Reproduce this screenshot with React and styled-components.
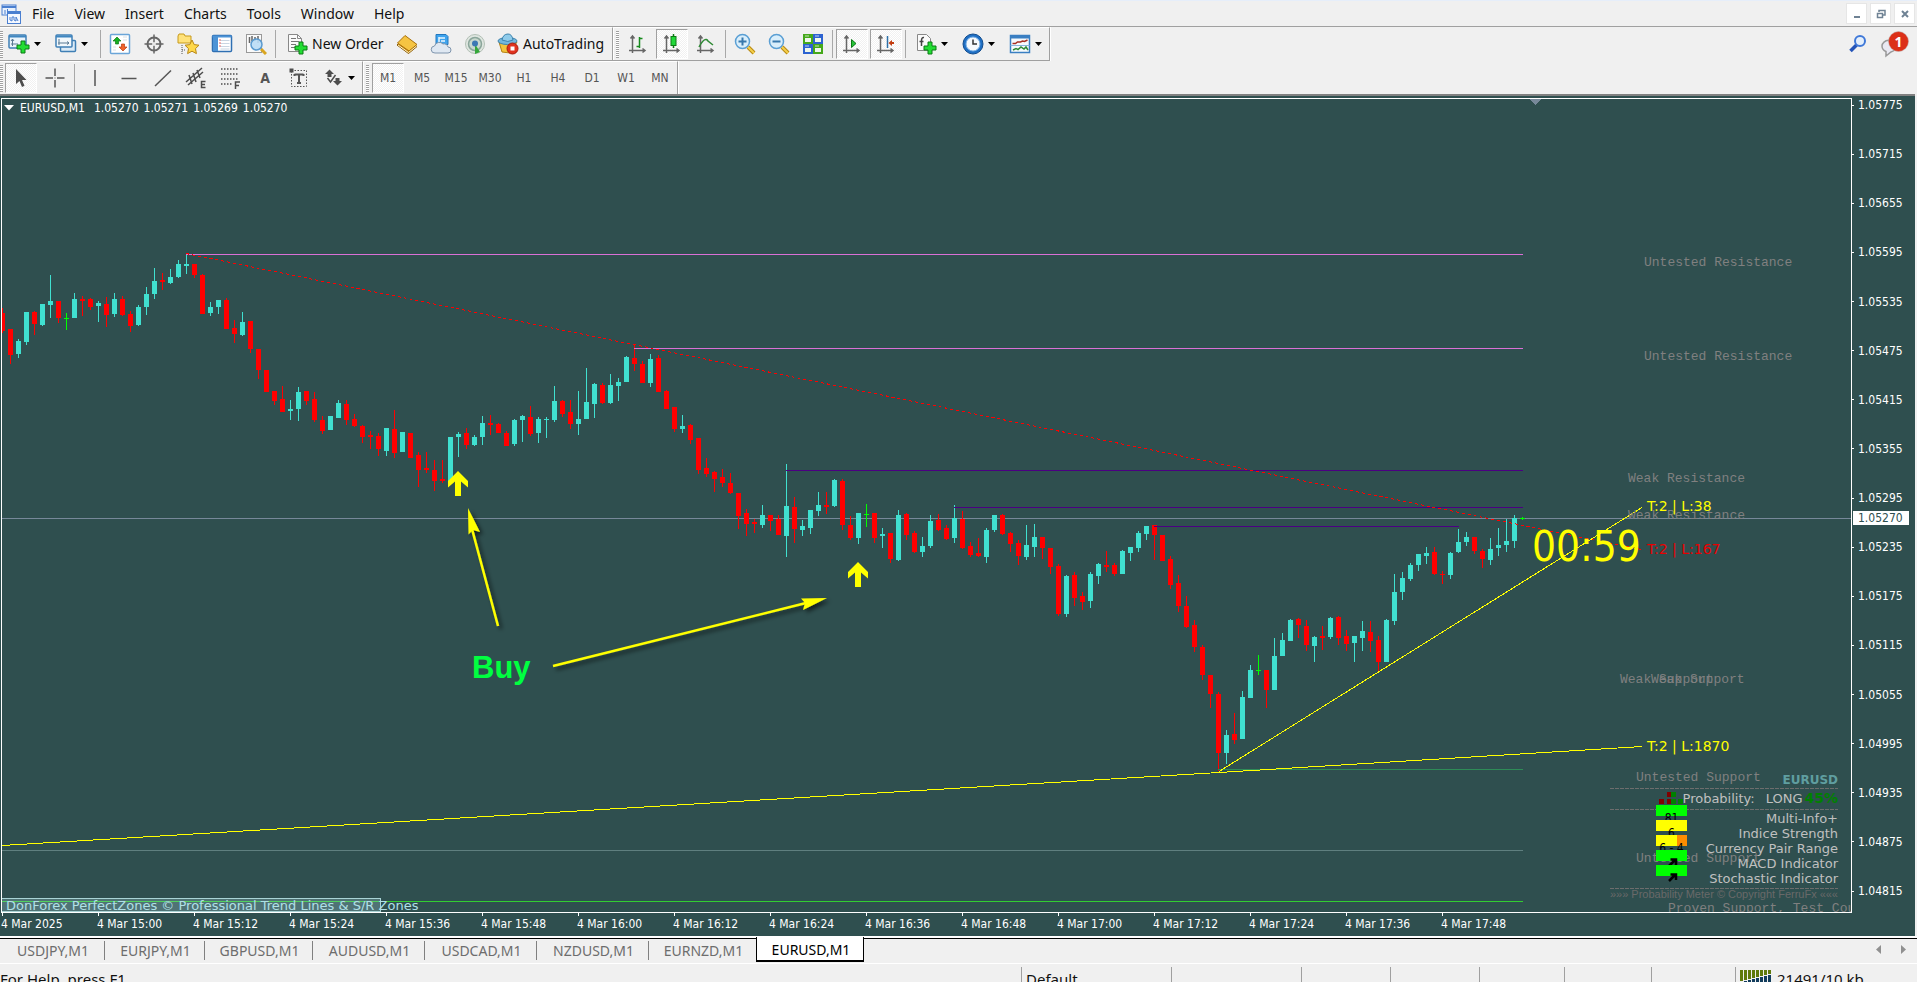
import React from "react";
import styled, { createGlobalStyle, css } from "styled-components";

const UI_FONT = '"Noto Sans", "Open Sans", sans-serif';
const CHART_FONT = '"DejaVu Sans Condensed", "DejaVu Sans", sans-serif';
const WIDE_FONT = '"DejaVu Sans", sans-serif';
const MONO_FONT = '"Liberation Mono", monospace';

const GlobalStyle = createGlobalStyle`
  * { box-sizing: border-box; }
  body { margin: 0; background: #f0f0f0; overflow: hidden; }
  button { font: inherit; color: inherit; border: 0; padding: 0; background: none; }
`;

const Window = styled.div`
  display: flex;
  flex-direction: column;
  height: 100vh;
  background: #f0f0f0;
  font-family: ${UI_FONT};
  color: #111;
`;

/* ---------- menu and toolbars ---------- */

const MenuBar = styled.nav`
  display: flex;
  align-items: center;
  flex: none;
  height: 27px;
  border-top: 1px solid #e6eefa;
  border-bottom: 1px solid #a0a0a0;
  font-size: 14px;
`;

const MenuItem = styled.button`
  padding: 0 10px;
  line-height: 24px;
  white-space: nowrap;
`;

const WindowButtons = styled.div`
  display: flex;
  gap: 3px;
  margin: 0 2px 0 auto;
`;

const WindowButton = styled.button`
  display: flex;
  align-items: center;
  justify-content: center;
  width: 21px;
  height: 21px;
  background: #fff;
  border: 1px solid #e6e6e6;
`;

const ToolRow = styled.div`
  display: flex;
  flex: none;
  height: ${(p) => (p.$last ? "33px" : "34px")};
`;

const ToolStrip = styled.div`
  display: flex;
  align-items: center;
  border-top: 1px solid #fff;
  border-right: 1px solid #a0a0a0;
  border-bottom: ${(p) => (p.$last ? "0" : "1px solid #a0a0a0")};
  box-shadow: 1px 0 0 #fff;
  padding-left: ${(p) => (p.$first ? "0" : "3px")};
`;

const Grip = styled.span`
  width: 3px;
  height: 27px;
  margin-right: ${(p) => (p.$first ? "1px" : "2px")};
  background: repeating-linear-gradient(#a0a0a0 0 1px, #fff 1px 2px);
`;

const Divider = styled.span`
  width: 1px;
  height: 28px;
  margin: 0 2px;
  background: #a8a8a8;
`;

const pressed = css`
  background: repeating-conic-gradient(#fff 0 25%, #f1f1f1 0 50%) 0 0 / 2px 2px;
  border: 1px solid #fff;
  border-top-color: #a0a0a0;
  border-left-color: #a0a0a0;
`;

const ToolButton = styled.button`
  display: flex;
  align-items: center;
  justify-content: center;
  width: 32px;
  height: 30px;
  margin: 0 1px;
  ${(p) => p.$pressed && pressed}
`;

const SplitButton = styled.button`
  display: flex;
  align-items: center;
  justify-content: center;
  gap: 4px;
  width: 47px;
  height: 30px;
  padding-right: ${(p) => (p.$near ? "6px" : "0")};
`;

const TextButton = styled.button`
  display: flex;
  align-items: center;
  gap: 4px;
  height: 30px;
  width: ${(p) => p.$w}px;
  padding-left: ${(p) => p.$pad}px;
  font-size: 14px;
  line-height: 20px;
  white-space: nowrap;
`;

const PeriodButton = styled(ToolButton)`
  font-family: ${CHART_FONT};
  font-size: 12px;
  color: #555;
`;

const ToolRight = styled.div`
  display: flex;
  align-items: center;
  gap: 13px;
  margin: 0 8px 0 auto;
`;

const IconButton = styled.button`
  display: flex;
`;

/* ---------- chart ---------- */

const ChartFrame = styled.main`
  flex: 1;
  min-height: 0;
  display: grid;
  grid-template-columns: 1fr 63px;
  grid-template-rows: 1fr 23px;
  padding: 2px 0 0 1px;
  margin-right: 2px;
  background: #2f4f4f;
  color: #fff;
  border-top: 2px solid #808080;
  font-family: ${CHART_FONT};
  font-size: 12px;
  line-height: 14px;
`;

const Plot = styled.section`
  position: relative;
  border: 1px solid #fff;
  overflow: hidden;
`;

const Drawing = styled.svg`
  position: absolute;
  inset: 0;
  width: 100%;
  height: 100%;
`;

const PlotTitle = styled.h1`
  position: absolute;
  top: 2px;
  left: 2px;
  display: flex;
  align-items: center;
  gap: 5px;
  margin: 0;
  font-size: 12px;
  font-weight: 400;
  line-height: 14px;
  white-space: nowrap;
`;

const SymbolName = styled.span`
  margin: 0 4px 0 1px;
`;

const PriceAxis = styled.aside`
  position: relative;
  display: flex;
  flex-direction: column;
  justify-content: space-between;
  padding-bottom: 15px;
`;

const PriceLabel = styled.span`
  display: flex;
  align-items: center;
  gap: 4px;
  &::before { content: ""; width: 2px; height: 1px; background: #fff; }
`;

const CurrentPrice = styled.span`
  position: absolute;
  top: 413px;
  left: 1px;
  width: 56px;
  padding-left: 5px;
  background: #fff;
  color: #2f4f4f;
`;

const TimeAxis = styled.footer`
  display: flex;
  overflow: hidden;
  grid-column: 1 / -1;
`;

const TimeLabel = styled.span`
  flex: 0 0 96px;
  white-space: nowrap;
  &::before { content: ""; display: block; width: 1px; height: 3px; margin-left: 1px; background: #fff; }
  span { display: block; margin-top: 1px; }
`;

const Caption = styled.div`
  position: absolute;
  left: 0;
  bottom: 0;
  width: 379px;
  height: 14px;
  padding-left: 4px;
  background: rgba(176, 224, 230, 0.25);
  border: 1px solid #a9d3d5;
  border-left: 0;
  color: #b0e0e6;
  font-family: ${WIDE_FONT};
  font-size: 13px;
  line-height: 14px;
  white-space: nowrap;
`;

const Meter = styled.section`
  position: absolute;
  right: 13px;
  bottom: 13px;
  width: 228px;
  color: #c0c0c0;
  font-family: ${WIDE_FONT};
  font-size: 13px;
  line-height: 15px;
  text-align: right;
`;

const MeterSymbol = styled.h2`
  margin: 0;
  color: #5f9ea0;
  font-size: 12px;
  font-weight: 700;
  line-height: 16px;
`;

const MeterRule = styled.div`
  height: 1px;
  background: repeating-linear-gradient(90deg, #6d6d6d 0 4px, transparent 4px 5px);
`;

const MeterOdds = styled.div`
  display: flex;
  justify-content: flex-end;
  align-items: center;
  height: 20px;
  padding-bottom: 2px;
  strong { margin-left: 2px; color: #008000; font-size: 14px; }
  span { margin-left: 11px; }
`;

const MeterList = styled.div`
  padding: 1px 0 2px;
`;

const MeterNote = styled.p`
  display: flex;
  justify-content: space-between;
  margin: 0;
  color: #696969;
  font-family: "Liberation Sans", sans-serif;
  font-size: 11px;
  line-height: 10px;
`;

const Swatches = styled.div`
  position: absolute;
  top: 33px;
  left: 46px;
  width: 31px;
`;

const SwatchCell = styled.div`
  position: relative;
  height: 15px;
  color: #000;
  font-family: ${CHART_FONT};
  font-size: 12px;
  line-height: 13px;
  text-align: center;
  white-space: nowrap;
  &::before {
    content: "";
    display: block;
    height: 11px;
    margin-bottom: -4px;
    background: ${(p) => p.$fill};
  }
  svg { display: block; margin: 1px 0 0 12px; }
`;

/* ---------- tabs and status bar ---------- */

const TabBar = styled.div`
  display: flex;
  align-items: flex-start;
  height: 28px;
  border-top: 2px solid #fff;
  border-bottom: 1px solid #fff;
  box-shadow: inset 0 1px 0 #000;
  font-size: 14px;
  color: #6d6d6d;
  flex: none;
`;

const Tab = styled.button`
  width: ${(p) => p.$w}px;
  height: 19px;
  margin-top: 3px;
  padding: 0 0 0 2px;
  line-height: 18px;
  border-right: ${(p) => (p.$lastPlain ? "0" : "1px solid #808080")};
  ${(p) =>
    p.$active &&
    css`
      height: 25px;
      margin-top: -1px;
      padding-top: 3px;
      background: #fff;
      color: #000;
      border: 2px solid #000;
      border-top: 0;
      border-left-width: 1px;
      border-right-width: 1px;
    `}
`;

const TabArrows = styled.div`
  display: flex;
  gap: 20px;
  margin: 7px 11px 0 auto;
`;

const StatusBar = styled.footer`
  display: flex;
  flex: none;
  height: 18px;
  padding-top: 3px;
  overflow: hidden;
  font-size: 15px;
  line-height: 24px;
  white-space: nowrap;
`;

const StatusCell = styled.span`
  display: flex;
  gap: 5px;
  flex: ${(p) => (p.$w ? `0 0 ${p.$w}px` : "1 1 0")};
  padding-left: 4px;
  border-left: 1px solid #a0a0a0;
  &:first-child { padding: 0; border: 0; }
  svg { flex: none; margin-top: 3px; }
`;

/* ---------- icons ---------- */

const Icon = ({ children, size = 22 }) => (
  <svg width={size} height={size} viewBox={`0 0 ${size} ${size}`} fill="none" aria-hidden="true">
    {children}
  </svg>
);

const Caret = () => (
  <svg width="7" height="4" viewBox="0 0 7 4" aria-hidden="true">
    <path d="M0 0h7L3.500 4z" fill="#000" />
  </svg>
);

const Plus = ({ x, y }) => (
  <path
    transform={`translate(${x} ${y})`}
    d="M4.500 .5h4v4h4v4h-4v4h-4v-4h-4v-4h4z"
    fill="#22dd33"
    stroke="#0a7a14"
  />
);

const AppIcon = () => (
  <Icon>
    <rect x="2" y="2" width="14" height="10" fill="#e8f1fd" stroke="#4a7fd0" />
    <path d="M2 4h14" stroke="#4a7fd0" strokeWidth="2" />
    <path d="M5 7v4M7.500 6v5" stroke="#4a7fd0" />
    <rect x="7.500" y="8.500" width="13" height="12" fill="#f4f8ff" stroke="#4a7fd0" />
    <path d="M7.500 10h13" stroke="#4a7fd0" strokeWidth="2" />
    <path d="M10 14v3l2 1v-4h2v3l2 1v-4l2 4" stroke="#4a7fd0" />
  </Icon>
);

const NewChartIcon = () => (
  <Icon>
    <rect x="1" y="2" width="17" height="13" rx="1" fill="#eaf4fb" stroke="#3f7fb5" strokeWidth="1.500" />
    <path d="M1 3.500h17" stroke="#3f86c0" strokeWidth="2" />
    <path d="M4.500 6v7M3 11h7M3 8l1.500-2L6 8" stroke="#5a7a94" />
    <Plus x={8.5} y={7.5} />
  </Icon>
);

const ProfileIcon = () => (
  <Icon>
    <rect x="5.500" y="7.500" width="15" height="11" rx="1" fill="#dcebf7" stroke="#3f7fb5" strokeWidth="1.500" />
    <rect x="1" y="2" width="16" height="12" rx="1" fill="#f2f8fc" stroke="#3f7fb5" strokeWidth="1.500" />
    <path d="M1 3.500h16" stroke="#3f86c0" strokeWidth="2" />
    <path d="M4 6v6M3 10h11M12 8.500l2 1.500-2 1.500" stroke="#5a7a94" />
  </Icon>
);

const MarketWatchIcon = () => (
  <Icon>
    <rect x="1.500" y="1.500" width="19" height="19" rx="1" fill="#fff" stroke="#6aa5d8" strokeWidth="1.500" />
    <path d="M8 4l4 4H9.500v3h-3V8H4z" fill="#16b023" stroke="#0d7a17" strokeWidth=".7" />
    <path d="M14 18l-4-4h2.500v-3h3v3H18z" fill="#f0632a" stroke="#b53a10" strokeWidth=".7" />
    <path d="M14 4h4M14 7h4M4 14h3M4 17h3" stroke="#d8e0e6" />
  </Icon>
);

const TargetIcon = () => (
  <Icon>
    <circle cx="11" cy="11" r="6.500" stroke="#666" strokeWidth="2" />
    <path d="M11 1.500v19M1.500 11h19" stroke="#666" strokeWidth="1.500" />
    <path d="M11 9v4M9 11h4" stroke="#f0f0f0" strokeWidth="1.500" />
  </Icon>
);

const NavigatorIcon = () => (
  <Icon>
    <path d="M1 3l1-2h5l1 2h6v7H1z" fill="#ffe27a" stroke="#c79a1d" />
    <path d="M5 12v9M5 17h4" stroke="#555" strokeDasharray="1 1" />
    <path d="M15 7l2.200 4.600 4.800.6-3.500 3.400.9 5-4.400-2.400-4.400 2.400.9-5L8 12.200l4.800-.6z" fill="#ffd84a" stroke="#b88715" />
  </Icon>
);

const TerminalIcon = () => (
  <Icon>
    <rect x="1.500" y="2.500" width="19" height="16" rx="1" fill="#fff" stroke="#2f6fb2" strokeWidth="1.500" />
    <path d="M1.500 3.500h19" stroke="#4c93d6" strokeWidth="2" />
    <rect x="2" y="4" width="5" height="14" fill="#4c93d6" />
    <path d="M9.500 7.500h9M9.500 10.500h9M9.500 13.500h9M9.500 16h9" stroke="#c9d6e2" />
    <path d="M8.500 7h1M8.500 10h1M8.500 13h1" stroke="#e03030" strokeWidth="1.500" />
  </Icon>
);

const TesterIcon = () => (
  <Icon>
    <rect x="1.500" y="1.500" width="15" height="18" fill="#fafafa" stroke="#999" />
    <path d="M4.500 4v6M7 3v5M10 4v4M13 3v7" stroke="#666" strokeWidth="1.500" />
    <path d="M16 16l5 5" stroke="#d9a520" strokeWidth="3" />
    <circle cx="11.500" cy="11.500" r="5.500" fill="#b9dcf5" fillOpacity=".9" stroke="#5b9bd0" strokeWidth="1.500" />
  </Icon>
);

const NewOrderIcon = () => (
  <Icon>
    <path d="M2.500 1.500h9l4 4v13h-13z" fill="#fafafa" stroke="#888" />
    <path d="M11.500 1.500v4h4" stroke="#888" />
    <path d="M5 5.500h5M5 8.500h8M5 11.500h5M5 14.500h4" stroke="#777" />
    <Plus x={8.5} y={8.5} />
  </Icon>
);

const BookIcon = () => (
  <Icon>
    <path d="M1 12L9 4.500l12 9-8.500 7z" fill="#c88a10" stroke="#8a5a06" />
    <path d="M1.500 10L9 2.500l12 9-8 6.500z" fill="#f5c442" stroke="#a8700c" />
    <path d="M2 12l10.500 7.500 8-6.500" stroke="#fff3c4" />
  </Icon>
);

const CloudIcon = () => (
  <Icon>
    <path d="M6 1.500h10l2 2v8H6z" fill="#3fa4ee" stroke="#2278bf" />
    <path d="M9 4v6M9 5h6M11 8h4" stroke="#e9f6ff" strokeWidth="1.500" />
    <path d="M5 20a3.500 3.500 0 0 1-.5-7A5 5 0 0 1 13 11a4 4 0 0 1 5 3 3 3 0 0 1 0 6z" fill="#dfe8f2" stroke="#7f95ad" />
  </Icon>
);

const SignalIcon = () => (
  <Icon>
    <circle cx="11" cy="11" r="9.500" fill="#dfe6e0" stroke="#b3c0b6" />
    <circle cx="11" cy="11" r="6.500" fill="#c9d8ce" stroke="#8aa59a" strokeWidth="1.500" />
    <path d="M11 11l5 8-5 2z" fill="#35a83a" />
    <circle cx="11" cy="10.500" r="3" fill="#3c78b4" />
  </Icon>
);

const AutoIcon = () => (
  <Icon>
    <path d="M2 9l3 10 8 1 7-11z" fill="#f3c43c" stroke="#b48113" />
    <ellipse cx="10.500" cy="8" rx="9.500" ry="3.500" fill="#74b7dc" stroke="#3c83ae" />
    <path d="M5 7q1-6 6-6 4 0 5 6-5 3-11 0z" fill="#8fcbea" stroke="#3c83ae" />
    <circle cx="15.500" cy="15.500" r="5.500" fill="#e0321e" stroke="#a81c0c" />
    <rect x="13.500" y="13.500" width="4" height="4" fill="#fff" />
  </Icon>
);

const Axes = () => (
  <path
    d="M5.500 3v17M2 17.500h16M3.500 5.500l2-2.500 2 2.500M15.500 15.500l2.500 2-2.500 2"
    stroke="#666"
    strokeWidth="1.500"
  />
);

const BarsIcon = () => (
  <Icon>
    <Axes />
    <path d="M12.500 4v11M12.500 5.500h3M9.500 13.500h3" stroke="#178a1d" strokeWidth="1.500" />
  </Icon>
);

const CandleIcon = () => (
  <Icon>
    <Axes />
    <path d="M12.500 1v14" stroke="#0c7a14" strokeWidth="1.500" />
    <rect x="10" y="3.500" width="5" height="9" fill="#20d838" stroke="#0c7a14" />
  </Icon>
);

const LineIcon = () => (
  <Icon>
    <Axes />
    <path d="M4 14Q10 3 13 8l5 4" stroke="#2f8a35" strokeWidth="1.500" />
  </Icon>
);

const ZoomIcon = ({ plus }) => (
  <Icon>
    <path d="M14 14l6 6" stroke="#b98a12" strokeWidth="4" />
    <path d="M14 14l6 6" stroke="#f5cf4b" strokeWidth="2" />
    <circle cx="8.500" cy="8.500" r="7" fill="#d9eefb" stroke="#5a9fd4" strokeWidth="1.500" />
    <path d={plus ? "M4.500 8.500h8M8.500 4.500v8" : "M4.500 8.500h8"} stroke="#3778ad" strokeWidth="2" />
  </Icon>
);

const TileIcon = () => (
  <Icon>
    {[
      [1, 1, "#45a81a"],
      [11, 1, "#2c62d0"],
      [1, 11, "#2c62d0"],
      [11, 11, "#45a81a"],
    ].map(([x, y, c]) => (
      <g key={`${x}-${y}`}>
        <rect x={x} y={y} width="10" height="10" fill={c} />
        <rect x={x + 2} y={y + 4} width="6" height="4" fill="#eef6ea" />
        <path d={`M${x + 2} ${y + 2}h4`} stroke="#fff" strokeOpacity=".7" />
      </g>
    ))}
  </Icon>
);

const ScrollIcon = () => (
  <Icon>
    <Axes />
    <path d="M10.500 6.500v8l4.500-4z" fill="#27c23a" stroke="#0c7a14" />
  </Icon>
);

const ShiftIcon = () => (
  <Icon>
    <Axes />
    <path d="M12.500 3v12" stroke="#2c70a8" strokeWidth="1.500" />
    <path d="M19 10h-4" stroke="#c23c10" strokeWidth="2" />
    <path d="M13.500 10l3.500-3v6z" fill="#c23c10" />
  </Icon>
);

const IndicatorIcon = () => (
  <Icon>
    <path d="M2.500 1.500h9l4 4v12h-13z" fill="#fafafa" stroke="#888" />
    <path d="M9 4.500Q6.500 4 6.500 8v5M4.500 8.500h4" stroke="#444" strokeWidth="1.500" />
    <Plus x={8.5} y={8.5} />
  </Icon>
);

const ClockIcon = () => (
  <Icon>
    <circle cx="11" cy="11" r="10" fill="#1f6fc4" stroke="#134d8e" />
    <circle cx="11" cy="11" r="7" fill="#f6f9fc" stroke="#79b0e6" />
    <path d="M11 6.500V11h4" stroke="#333" strokeWidth="1.500" />
  </Icon>
);

const TemplateIcon = () => (
  <Icon>
    <rect x="1.500" y="2.500" width="19" height="17" fill="#f6fafd" stroke="#3a7fc2" strokeWidth="1.500" />
    <path d="M1.500 4h19" stroke="#3a7fc2" strokeWidth="3" />
    <path d="M1.500 12.500h19" stroke="#8ab6dd" />
    <path d="M3.500 10.500h3l2-1.500h3l2-1 2 .5 3-1.500" stroke="#a83022" strokeWidth="1.500" />
    <path d="M4 17l3-1.500 2 1 3-2.500 3 2 2-2 2 3" stroke="#2f8a35" strokeWidth="1.500" />
  </Icon>
);

const SearchIcon = () => (
  <Icon>
    <path d="M10.500 12l-6 6" stroke="#2454b8" strokeWidth="3.500" />
    <circle cx="14" cy="8" r="5" fill="#e4effb" stroke="#3f78d8" strokeWidth="2" />
  </Icon>
);

const ChatIcon = () => (
  <Icon size={28}>
    <path d="M1 16a7 6 0 1 1 9 6l-5 4v-4.500a6 6 0 0 1-4-5.500z" fill="#e9e9f2" stroke="#999" strokeWidth="1.500" />
    <circle cx="17.500" cy="11.500" r="10" fill="#dc3018" stroke="#b9b0b0" strokeWidth=".5" />
    <text x="17.500" y="16.500" fontSize="14" fontWeight="700" fill="#fff" textAnchor="middle">1</text>
  </Icon>
);

const CursorIcon = () => (
  <Icon>
    <path d="M6 2v15l3.500-3 2.500 6 2.500-1.200-2.500-5.800h4.500z" fill="#4d4d4d" />
  </Icon>
);

const CrossIcon = () => (
  <Icon>
    <path d="M11 1.500v7.500M11 13v7.500M1.500 11H9M13 11h7.500" stroke="#555" strokeWidth="1.500" />
    <path d="M10.500 11h1" stroke="#555" />
  </Icon>
);

const VLineIcon = () => <Icon><path d="M12 3v16" stroke="#555" strokeWidth="1.500" /></Icon>;
const HLineIcon = () => <Icon><path d="M4.500 11.500h15" stroke="#555" strokeWidth="1.500" /></Icon>;
const TrendIcon = () => <Icon><path d="M4 19L20 3.500" stroke="#555" strokeWidth="1.500" /></Icon>;

const ChannelIcon = () => (
  <Icon>
    <path d="M1 15L17 1M3 18L18 5M4 8l3 9M8 6l3 9M12 3l3 8" stroke="#4d4d4d" strokeWidth="1.500" />
    <path d="M20.500 14.500h-4v6h4M16.500 17.500h3.500" stroke="#4d4d4d" strokeWidth="1.500" />
  </Icon>
);

const FiboIcon = () => (
  <Icon>
    <path d="M2 2h18M2 7h18M2 12h18M2 17h12" stroke="#4d4d4d" strokeWidth="1.500" strokeDasharray="1.500 1.500" />
    <path d="M16.500 22v-7h4.500M16.500 18.500h3.500" stroke="#4d4d4d" strokeWidth="1.500" />
  </Icon>
);

const LetterIcon = () => (
  <Icon>
    <text x="12" y="16" fontSize="14" fontWeight="700" fill="#555" textAnchor="middle" fontFamily={CHART_FONT}>A</text>
  </Icon>
);

const LabelIcon = () => (
  <Icon>
    <rect x="4.500" y="3.500" width="15" height="16" stroke="#555" strokeDasharray="1.500 1.500" />
    <path d="M2.500 1.500h4v4h-4z" fill="#4d4d4d" />
    <path d="M7.500 7.500h9M12 7v9M7.500 7v2M16.500 7v2M10 16h4" stroke="#555" strokeWidth="2" />
  </Icon>
);

const ArrowsIcon = () => (
  <Icon>
    <path d="M3 7l4.500-4.500L12 7H9.500v3h-4V7z" fill="#4d4d4d" />
    <path d="M11 14h2.500v-3h4v3H20l-4.500 4.500z" fill="#4d4d4d" />
    <path d="M5.500 11l3 4 5-7" stroke="#4d4d4d" strokeWidth="1.500" />
  </Icon>
);

/* ---------- chart data ---------- */

const R = "#ff0000";
const C = "#40e0d0";
const G = "#00ff00";

// [high, body top, body bottom, low, colour], one candle each 8 px
const CANDLES = [
  [308,313,331,333,R],[329,329,355,364,R],[339,341,354,358,C],[312,312,342,345,C],[311,312,324,335,R],
  [304,304,325,326,C],[275,301,305,318,C],[301,301,318,323,R],[313,318,319,330,G],[293,299,318,318,C],
  [296,299,301,316,R],[298,299,307,310,R],[301,303,306,322,C],[297,304,315,327,R],[293,299,314,317,C],
  [296,299,315,316,R],[311,314,326,332,R],[305,307,325,326,C],[287,294,307,315,C],[268,281,294,299,C],
  [273,280,282,290,R],[269,277,283,284,C],[260,264,277,278,C],[254,264,266,274,C],[264,264,275,278,R],
  [274,275,314,314,R],[302,307,313,316,C],[300,300,307,314,C],[298,300,329,329,R],[320,328,334,343,R],
  [312,322,335,336,C],[321,321,349,353,R],[349,349,370,379,R],[370,370,392,392,R],[391,391,401,405,R],
  [386,399,412,412,R],[400,409,411,420,C],[387,392,409,421,C],[391,391,401,405,R],[392,399,420,422,R],
  [416,420,431,434,R],[416,416,430,430,C],[400,403,418,418,C],[400,404,420,425,R],[414,419,426,427,R],
  [425,426,437,443,R],[431,435,437,449,R],[433,436,449,456,R],[428,428,451,456,C],[410,429,453,458,R],
  [432,432,452,452,C],[433,433,458,458,R],[452,455,470,487,R],[452,468,470,473,R],[460,470,481,491,R],
  [460,479,481,483,R],[437,437,481,481,C],[432,434,437,457,C],[428,433,445,449,R],[435,437,445,446,C],
  [416,423,437,445,C],[415,423,425,435,R],[423,424,433,433,R],[431,433,446,446,R],[419,420,444,446,C],
  [415,416,420,442,C],[406,417,434,436,R],[417,419,433,443,C],[417,419,420,438,C],[386,401,420,422,C],
  [400,401,414,417,R],[400,412,424,429,R],[391,419,424,435,C],[368,402,419,419,C],[383,384,404,418,C],
  [383,385,403,404,R],[374,385,403,404,C],[378,382,386,401,C],[356,357,382,382,C],[344,358,364,371,R],
  [361,364,383,383,R],[354,359,383,387,C],[355,358,392,392,R],[390,391,409,409,R],[407,407,429,432,R],
  [415,426,429,433,C],[424,425,440,444,R],[438,438,470,474,R],[458,468,474,477,R],[471,472,479,492,R],
  [469,477,483,487,R],[473,483,493,494,R],[493,493,516,529,R],[509,513,524,536,R],[519,522,524,533,R],
  [505,515,525,528,C],[515,515,521,531,R],[515,519,535,535,R],[464,506,536,557,C],[497,507,529,543,R],
  [520,526,530,536,C],[510,510,528,534,C],[492,505,511,516,C],[492,505,507,514,R],[479,480,506,507,C],
  [479,481,525,530,R],[516,525,538,540,R],[513,513,538,544,C],[504,514,515,527,G],[513,513,538,543,R],
  [528,534,536,548,C],[533,533,559,563,R],[510,515,560,561,C],[513,514,535,540,R],[531,533,552,553,R],
  [537,546,552,557,C],[515,521,546,548,C],[514,520,530,531,R],[525,528,539,540,R],[505,518,538,543,C],
  [511,519,548,549,R],[542,546,555,557,R],[538,553,556,557,R],[528,530,557,563,C],[515,515,530,532,C],
  [514,515,534,535,R],[532,533,544,552,R],[540,543,556,565,R],[525,545,557,560,C],[524,537,547,557,C],
  [537,537,548,559,R],[548,548,567,574,R],[564,566,614,616,R],[575,576,614,617,C],[572,575,598,606,R],
  [592,596,602,610,R],[572,574,601,608,C],[563,564,576,584,C],[551,565,567,572,R],[563,565,574,576,R],
  [550,551,574,574,C],[547,547,553,561,C],[531,533,548,552,C],[526,526,534,540,C],[525,525,535,560,R],
  [535,535,561,561,R],[556,559,585,589,R],[575,583,606,612,R],[596,606,627,628,R],[620,625,647,652,R],
  [645,647,675,680,R],[675,675,694,708,R],[692,694,753,771,R],[730,735,753,764,C],[713,734,740,744,R],
  [691,697,739,739,C],[665,670,698,698,C],[655,670,671,675,G],[670,670,690,708,R],[638,656,690,690,C],
  [633,640,656,656,C],[619,620,641,641,C],[618,619,625,638,R],[620,626,645,651,R],[636,637,646,662,C],
  [626,636,638,650,R],[617,618,637,639,C],[616,617,638,645,R],[630,636,644,651,R],[636,636,643,662,C],
  [621,631,638,651,C],[621,632,641,652,R],[636,640,662,671,R],[619,620,662,662,C],[574,592,621,625,C],
  [572,578,592,600,C],[563,565,579,581,C],[554,554,565,571,C],[547,553,556,564,C],[547,552,574,575,R],
  [571,574,575,584,R],[552,553,575,579,C],[529,542,552,553,C],[532,537,542,546,C],[537,537,551,554,R],
  [549,551,559,568,R],[538,549,560,565,C],[528,545,548,556,C],[519,541,545,552,C],[515,518,541,548,C],
  [517,518,519,520,G],
];

// [from x, to x, y, colour]
const LEVELS = [
  [186, 1523, 254, "#da70d6"],
  [634, 1523, 348, "#da70d6"],
  [786, 1523, 470, "#4b0082"],
  [954, 1523, 507, "#4b0082"],
  [1154, 1459, 526, "#4b0082"],
  [1218, 1523, 769, "#2e8b57"],
  [2, 1523, 850, "#5f7f7f"],
  [2, 1523, 901, "#32cd32"],
];

const ZONE_NOTES = [
  [1644, 266, "Untested Resistance"],
  [1644, 360, "Untested Resistance"],
  [1628, 482, "Weak Resistance"],
  [1628, 519, "Weak Resistance"],
  [1620, 683, "Weak Support"],
  [1651, 683, "Weak Support"],
  [1636, 781, "Untested Support"],
  [1636, 862, "Untested Support"],
  [1668, 912, "Proven Support, Test Count 3"],
];

const TREND_NOTES = [
  [511, "T:2 | L:38", "#ffff00"],
  [554, "T:2 | L:167", "#e80000"],
  [751, "T:2 | L:1870", "#ffff00"],
];

const QUOTES = ["1.05270", "1.05271", "1.05269", "1.05270"];

const PRICES = [
  "1.05775", "1.05715", "1.05655", "1.05595", "1.05535", "1.05475", "1.05415", "1.05355", "1.05295",
  "1.05235", "1.05175", "1.05115", "1.05055", "1.04995", "1.04935", "1.04875", "1.04815",
];

const TIMES = [
  "2025", "15:00", "15:12", "15:24", "15:36", "15:48", "16:00", "16:12",
  "16:24", "16:36", "16:48", "17:00", "17:12", "17:24", "17:36", "17:48",
];

const TABS = [
  ["USDJPY,M1", 105], ["EURJPY,M1", 100], ["GBPUSD,M1", 108], ["AUDUSD,M1", 112],
  ["USDCAD,M1", 112], ["NZDUSD,M1", 112], ["EURNZD,M1", 107], ["EURUSD,M1", 108],
];

const PERIODS = ["M1", "M5", "M15", "M30", "H1", "H4", "D1", "W1", "MN"];
const MENUS = ["File", "View", "Insert", "Charts", "Tools", "Window", "Help"];

const BuyMark = ({ x, y }) => (
  <path
    transform={`translate(${x} ${y})`}
    d="M0 0l10 10v6.500L3 10.500V25h-6V10.500l-7 6V10z"
    fill="#ffff00"
  />
);

const ChartDrawing = () => (
  <Drawing role="img" aria-label="EURUSD one minute candles">
    <defs>
      <filter id="shade" x="-20%" y="-20%" width="140%" height="140%">
        <feDropShadow dx="3" dy="3" stdDeviation="2" floodColor="#000" floodOpacity=".6" />
      </filter>
    </defs>
    <g transform="translate(-2 -99)">
      <g shapeRendering="crispEdges">
        <rect x="2" y="518" width="1849" height="1" fill="#778899" />
        {CANDLES.map(([hi, top, bottom, lo, fill], i) => (
          <g key={i} fill={fill}>
            <rect x={2 + i * 8} y={hi} width="1" height={lo - hi} />
            <rect x={i * 8} y={top} width="5" height={bottom - top} />
          </g>
        ))}
        {LEVELS.map(([x1, x2, y, fill]) => (
          <rect key={y} x={x1} y={y} width={x2 - x1} height="1" fill={fill} />
        ))}
        <path d="M186 253.500L1641 549.500" stroke="#ff0000" strokeDasharray="3 3" />
        <path d="M1219 771.500L1642 507.500" stroke="#ffff00" />
        <path d="M2 845.500L1219 772.500L1642 746.500" stroke="#ffff00" fill="none" />
        <path d="M1530 99h11l-5.500 6z" fill="#778899" />
      </g>
      <g fill="#808080" fontFamily={MONO_FONT} fontSize="13">
        {ZONE_NOTES.map(([x, y, note]) => (
          <text key={`${x}-${y}`} x={x} y={y}>{note}</text>
        ))}
      </g>
      <g fontFamily={WIDE_FONT} fontSize="14">
        {TREND_NOTES.map(([y, note, fill]) => (
          <text key={y} x="1647" y={y} fill={fill}>{note}</text>
        ))}
      </g>
      <text x="1532" y="561" fontSize="42" fill="#ffff00" fontFamily={CHART_FONT}>00:59</text>
      <BuyMark x={458} y={471} />
      <BuyMark x={858} y={562} />
      <g filter="url(#shade)" fill="#ffff00">
        <path d="M498 626L472 529" stroke="#ffff00" strokeWidth="2.500" />
        <path d="M468 508l12 24-7-2-4.500 4.500z" />
        <path d="M553 666L806 603" stroke="#ffff00" strokeWidth="2.500" />
        <path d="M827 598l-26 .5 4 4.500-2 7z" />
      </g>
      <text
        x="472" y="678" fontSize="31" fontWeight="700" fill="#00ff40"
        fontFamily='"Liberation Sans", sans-serif'
      >
        Buy
      </text>
    </g>
  </Drawing>
);

const StrongArrow = () => (
  <svg width="10" height="9" viewBox="0 0 10 9" aria-hidden="true">
    <path d="M1 8l6-6M2.500 1.500H8V7" stroke="#000" strokeWidth="2.500" fill="none" />
  </svg>
);

const ProbabilityMeter = () => (
  <Meter>
    <MeterSymbol>EURUSD</MeterSymbol>
    <MeterRule />
    <MeterOdds>
      <svg width="24" height="12" viewBox="0 0 24 12" shapeRendering="crispEdges" aria-hidden="true">
        <path d="M0 7h5v5H0zM8 0h4v5H8zM8 7h4v5H8z" fill="#800000" />
        <path d="M12 0h5v5h-5zM12 7h5v5h-5zM19 7h5v5h-5z" fill="#008000" />
      </svg>
      Probability: <span>LONG</span>
      <strong>45%</strong>
    </MeterOdds>
    <MeterRule />
    <MeterList>
      <div>Multi-Info+</div>
      <div>Indice Strength</div>
      <div>Currency Pair Range</div>
      <div>MACD Indicator</div>
      <div>Stochastic Indicator</div>
    </MeterList>
    <MeterRule />
    <MeterNote>
      <span>»»»</span>
      <span>Probability Meter © Copyright FerruFx</span>
      <span>«««</span>
    </MeterNote>
    <Swatches>
      <SwatchCell $fill="#00ff00">81</SwatchCell>
      <SwatchCell $fill="#ffff00">6</SwatchCell>
      <SwatchCell $fill="linear-gradient(90deg, #ffff00 21px, #ff8c00 21px)">6 - 4</SwatchCell>
      <SwatchCell $fill="#00ff00"><StrongArrow /></SwatchCell>
      <SwatchCell $fill="#00ff00"><StrongArrow /></SwatchCell>
    </Swatches>
  </Meter>
);

const split = (name, icon, near) => (
  <SplitButton aria-label={name} $near={near}>
    {icon}
    <Caret />
  </SplitButton>
);

const tool = (name, icon, on) => (
  <ToolButton aria-label={name} $pressed={on}>{icon}</ToolButton>
);

export default function App() {
  return (
    <Window>
      <GlobalStyle />
      <MenuBar>
        <AppIcon />
        {MENUS.map((m) => <MenuItem key={m}>{m}</MenuItem>)}
        <WindowButtons>
          <WindowButton aria-label="Minimize">
            <svg width="10" height="10"><path d="M2 8h6" stroke="#6f8294" strokeWidth="2" /></svg>
          </WindowButton>
          <WindowButton aria-label="Restore">
            <svg width="10" height="10" fill="none" stroke="#6f8294">
              <path d="M3 3V1.500h6V6H7" strokeWidth="1.500" />
              <path d="M1.500 4.500h5v4h-5z" strokeWidth="1.500" />
            </svg>
          </WindowButton>
          <WindowButton aria-label="Close">
            <svg width="10" height="10"><path d="M2 2l6 6M8 2l-6 6" stroke="#6f8294" strokeWidth="2" /></svg>
          </WindowButton>
        </WindowButtons>
      </MenuBar>

      <ToolRow>
        <ToolStrip $first>
          <Grip $first />
          {split("New chart", <NewChartIcon />, true)}
          {split("Profiles", <ProfileIcon />, true)}
          <Divider />
          {tool("Market watch", <MarketWatchIcon />)}
          {tool("Data window", <TargetIcon />)}
          {tool("Navigator", <NavigatorIcon />)}
          {tool("Terminal", <TerminalIcon />)}
          {tool("Strategy tester", <TesterIcon />)}
          <Divider />
          <TextButton $w={112} $pad={8}><NewOrderIcon />New Order</TextButton>
          {tool("Editor", <BookIcon />)}
          {tool("Cloud", <CloudIcon />)}
          {tool("Signals", <SignalIcon />)}
          <TextButton $w={120} $pad={5}><AutoIcon />AutoTrading</TextButton>
        </ToolStrip>
        <ToolStrip>
          <Grip />
          {tool("Bar chart", <BarsIcon />)}
          {tool("Candlesticks", <CandleIcon />, true)}
          {tool("Line chart", <LineIcon />)}
          <Divider />
          {tool("Zoom in", <ZoomIcon plus />)}
          {tool("Zoom out", <ZoomIcon />)}
          {tool("Tile windows", <TileIcon />)}
          <Divider />
          {tool("Auto scroll", <ScrollIcon />, true)}
          {tool("Chart shift", <ShiftIcon />, true)}
          <Divider />
          {split("Indicators", <IndicatorIcon />)}
          {split("Periods", <ClockIcon />)}
          {split("Templates", <TemplateIcon />)}
        </ToolStrip>
        <ToolRight>
          <IconButton aria-label="Search"><SearchIcon /></IconButton>
          <IconButton aria-label="Messages"><ChatIcon /></IconButton>
        </ToolRight>
      </ToolRow>

      <ToolRow $last>
        <ToolStrip $first $last>
          <Grip $first />
          {tool("Cursor", <CursorIcon />, true)}
          {tool("Crosshair", <CrossIcon />)}
          <Divider />
          {tool("Vertical line", <VLineIcon />)}
          {tool("Horizontal line", <HLineIcon />)}
          {tool("Trendline", <TrendIcon />)}
          {tool("Channel", <ChannelIcon />)}
          {tool("Fibonacci", <FiboIcon />)}
          {tool("Text", <LetterIcon />)}
          {tool("Text label", <LabelIcon />)}
          {split("Arrows", <ArrowsIcon />)}
        </ToolStrip>
        <ToolStrip $last>
          <Grip />
          {PERIODS.map((p, i) => (
            <PeriodButton key={p} $pressed={i === 0}>{p}</PeriodButton>
          ))}
        </ToolStrip>
      </ToolRow>

      <ChartFrame>
        <Plot>
          <ChartDrawing />
          <PlotTitle>
            <svg width="10" height="6" aria-hidden="true"><path d="M0 0h10L5 5.500z" fill="#fff" /></svg>
            <SymbolName>EURUSD,M1</SymbolName>
            {QUOTES.map((q, i) => <span key={i}>{q}</span>)}
          </PlotTitle>
          <Caption>DonForex PerfectZones © Professional Trend Lines &amp; S/R Zones</Caption>
          <ProbabilityMeter />
        </Plot>
        <PriceAxis>
          {PRICES.map((p) => <PriceLabel key={p}>{p}</PriceLabel>)}
          <CurrentPrice>1.05270</CurrentPrice>
        </PriceAxis>
        <TimeAxis>
          {TIMES.map((t) => <TimeLabel key={t}><span>4 Mar {t}</span></TimeLabel>)}
        </TimeAxis>
      </ChartFrame>

      <TabBar>
        {TABS.map(([name, w], i) => (
          <Tab key={name} $w={w} $active={i === 7} $lastPlain={i === 6}>{name}</Tab>
        ))}
        <TabArrows>
          <svg width="5" height="9" aria-hidden="true"><path d="M5 0v9L0 4.500z" fill="#909090" /></svg>
          <svg width="5" height="9" aria-hidden="true"><path d="M0 0v9l5-4.500z" fill="#909090" /></svg>
        </TabArrows>
      </TabBar>

      <StatusBar>
        <StatusCell>For Help, press F1</StatusCell>
        <StatusCell $w={150}>Default</StatusCell>
        <StatusCell $w={130} />
        <StatusCell $w={89} />
        <StatusCell $w={89} />
        <StatusCell $w={85} />
        <StatusCell $w={87} />
        <StatusCell $w={84} />
        <StatusCell $w={182}>
          <svg width="32" height="16" shapeRendering="crispEdges" aria-hidden="true">
            {[0, 1, 2, 3, 4, 5, 6, 7].map((i) => (
              <g key={i}>
                <rect x={i * 4} y="0" width="3" height={11 - i} fill="#5f7a0a" />
                <rect x={i * 4} y={12 - i} width="3" height={4 + i} fill="#123c5c" />
              </g>
            ))}
          </svg>
          21491/10 kb
        </StatusCell>
      </StatusBar>
    </Window>
  );
}
